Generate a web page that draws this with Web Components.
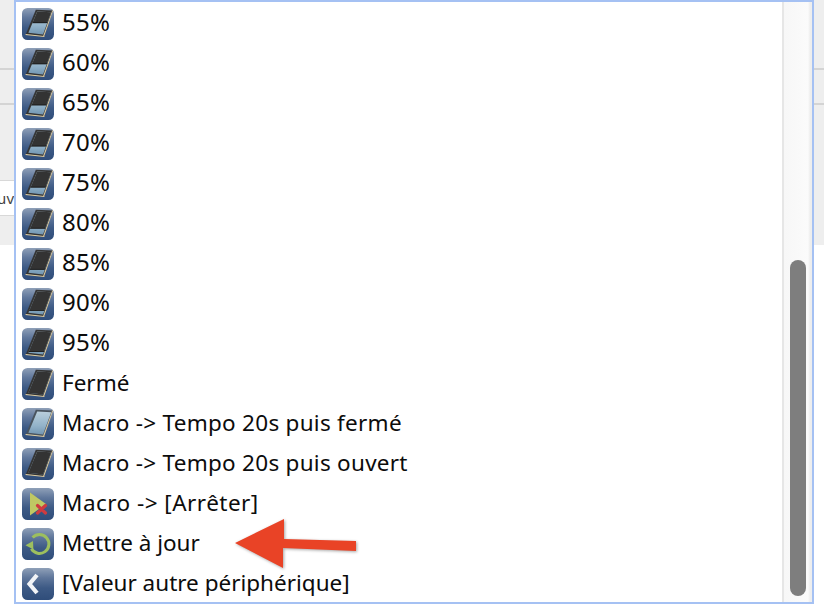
<!DOCTYPE html>
<html lang="fr"><head><meta charset="utf-8"><title>Liste</title>
<style>
html,body{margin:0;padding:0;background:#fff}
body{width:824px;height:608px;overflow:hidden;position:relative;font-family:"Noto Sans",sans-serif}
x-row.pct{--row-size:24px;--row-line:36px;letter-spacing:.3px}
x-row.mac{letter-spacing:.27px}
x-row.stp{letter-spacing:.47px}
</style></head><body>
<x-backdrop></x-backdrop>
<x-listbox>
<x-row class="pct" icon="window" level="55">55%</x-row>
<x-row class="pct" icon="window" level="60">60%</x-row>
<x-row class="pct" icon="window" level="65">65%</x-row>
<x-row class="pct" icon="window" level="70">70%</x-row>
<x-row class="pct" icon="window" level="75">75%</x-row>
<x-row class="pct" icon="window" level="80">80%</x-row>
<x-row class="pct" icon="window" level="85">85%</x-row>
<x-row class="pct" icon="window" level="90">90%</x-row>
<x-row class="pct" icon="window" level="95">95%</x-row>
<x-row icon="window" level="100">Fermé</x-row>
<x-row class="mac" icon="window" level="0">Macro -&gt; Tempo 20s puis fermé</x-row>
<x-row class="mac" icon="window" level="100">Macro -&gt; Tempo 20s puis ouvert</x-row>
<x-row class="stp" icon="stop">Macro -&gt; [Arrêter]</x-row>
<x-row icon="refresh">Mettre à jour</x-row>
<x-row icon="back">[Valeur autre périphérique]</x-row>
</x-listbox>
<x-arrow></x-arrow>
<script>
function def(name, css, html, init){
  customElements.define(name, class extends HTMLElement{
    constructor(){super();const r=this.attachShadow({mode:'open'});r.innerHTML='<style>'+css+'</style>'+html;}
    connectedCallback(){if(init)init(this);}
  });
}
def('x-backdrop',`
:host{display:flex;flex-direction:column;width:824px;height:245px;background:#eeeeee}
.sp1{height:68px}.ln{height:2px;background:#d4d4d4}.sp2{height:33px}.sp3{height:75px}
.field{height:36px;width:14px;background:#fff;border-top:1px solid #d8d8d8;border-bottom:1px solid #d8d8d8;box-sizing:border-box;font:15px "Noto Sans",sans-serif;color:#444;overflow:hidden;line-height:34px;white-space:nowrap;direction:rtl}
`,`<div class="sp1"></div><div class="ln"></div><div class="sp2"></div><div class="ln"></div><div class="sp3"></div><div class="field">uv</div>`);

def('x-listbox',`
:host{position:absolute;left:14px;top:0;width:800px;height:604px;box-sizing:border-box;border:2px solid #a5c1f3;background:#fff;display:flex;overflow:hidden}
.list{flex:1;min-width:0;padding-top:2px;overflow:hidden}
.track{width:30px;flex:none;box-sizing:border-box;padding:258px 6px 0 6px;background:linear-gradient(90deg,#e6e6e6 0,#e6e6e6 2px,#f7f7f7 2px,#fbfbfb 26px,#eeeeee 28px,#eeeeee 100%);}
.thumb{height:336px;border-radius:8px;background:#7e7e7e;margin-left:2px}
`,`<div class="list"><slot></slot></div><div class="track"><div class="thumb"></div></div>`);

def('x-row',`
:host{display:flex;align-items:flex-start;gap:8px;height:40px;padding-left:6px;font:var(--row-size,22.5px)/var(--row-line,38px) "Noto Sans",sans-serif;color:#0c0c0c;white-space:nowrap}
svg{width:32px;height:32px;flex:none;display:block;margin-top:4px;filter:blur(.35px)}
`,`<svg viewBox="0 0 32 32"></svg><span><slot></slot></span>`,el=>{
  const svg=el.shadowRoot.querySelector('svg');
  const id='g'+Math.random().toString(36).slice(2,8);
  const kind=el.getAttribute('icon');
  let inner=`<defs><linearGradient id="${id}b" x1="0" y1="0" x2="0" y2="1"><stop offset="0" stop-color="#8fa0b8"/><stop offset=".3" stop-color="#60779b"/><stop offset=".62" stop-color="#3d5a85"/><stop offset="1" stop-color="#2f4d7a"/></linearGradient>
  <linearGradient id="${id}g" x1="0" y1="0" x2="0" y2="1"><stop offset="0" stop-color="#c3d5e0"/><stop offset=".55" stop-color="#93b3c9"/><stop offset="1" stop-color="#5f86a5"/></linearGradient>
  <clipPath id="${id}c"><path d="M15.2 3.6 29.2 4.2 21 26.4 6.4 24.8Z"/></clipPath></defs>
  <rect width="32" height="32" rx="5.5" fill="url(#${id}b)"/>`;
  if(kind==='window'){
    const l=+el.getAttribute('level');
    const h=l>=100?32:(3+(25-3)*l/100);
    inner+=`<path d="M13.8 1.8 31 2.6 22 28.8 3.6 26.8Z" fill="${l===0?'#4a545e':'#353535'}"/>
    <path d="M3.8 26 22 28 22.6 29 3.4 27Z" fill="#e2d2a8"/>
    <path d="M22 29 31.2 2.6 30.2 2.6 21.2 27.8Z" fill="#d6c8a4"/>
    <g clip-path="url(#${id}c)"><rect x="0" y="0" width="32" height="32" fill="url(#${id}g)"/><rect x="0" y="0" width="32" height="${h}" fill="#333"/>
    ${l>0?`<rect x="0" y="${h-.8}" width="32" height=".8" fill="#191919"/>`:''}</g>`;
  }else if(kind==='stop'){
    inner+=`<path d="M8 4.5 24 16 8 27.5Z" fill="#bfc863"/>
    <path d="M15.5 17.5 23.5 25M23.5 17.5 15.5 25" stroke="#cf3b3f" stroke-width="3.2" stroke-linecap="round"/>`;
  }else if(kind==='refresh'){
    inner+=`<path d="M10.6 9.6A9.4 9.4 0 1 1 9.4 20.8" fill="none" stroke="#9dbf5e" stroke-width="3"/>
    <path d="M3.5 17.2 11 13 11.4 21.5Z" fill="#9dbf5e"/>`;
  }else{
    inner+=`<path d="M15 7 7.5 16 15 25" fill="none" stroke="#f2f4f7" stroke-width="4.2"/>`;
  }
  svg.innerHTML=inner;
});

def('x-arrow',`
:host{position:absolute;left:230px;top:514px;width:132px;height:60px;display:block}
svg{display:block;overflow:visible;filter:drop-shadow(1px 1px 1.5px rgba(0,0,0,.35))}
`,`<svg width="132" height="60" viewBox="230 514 132 60"><path d="M235 543 284 519 284 539 356 541 356 551 283 548 283 568Z" fill="#e94326"/></svg>`);
</script>
</body></html>
